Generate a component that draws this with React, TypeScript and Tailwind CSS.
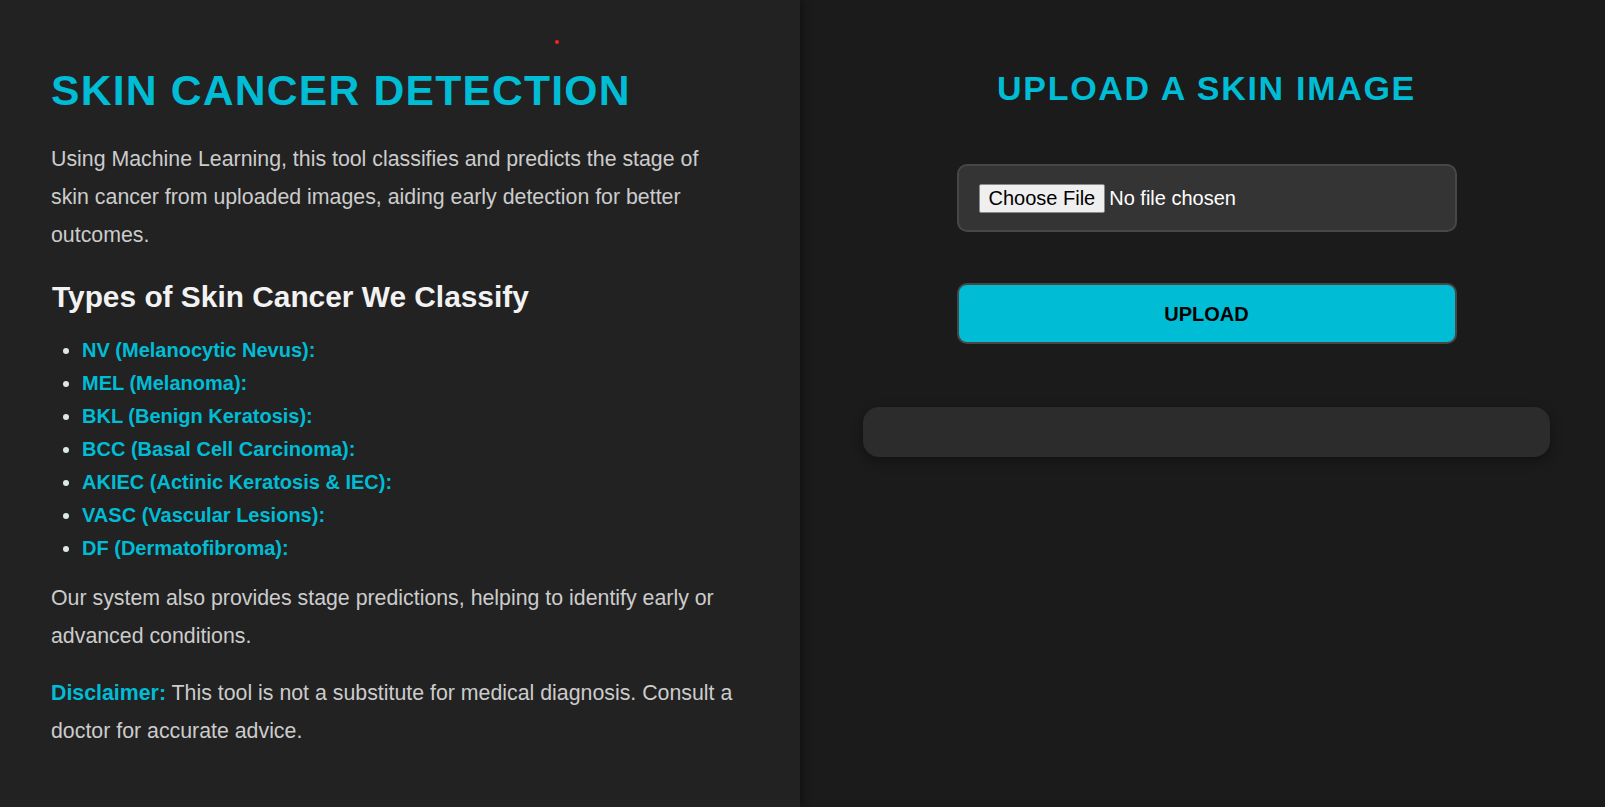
import React from 'react';

const types = [
  'NV (Melanocytic Nevus):',
  'MEL (Melanoma):',
  'BKL (Benign Keratosis):',
  'BCC (Basal Cell Carcinoma):',
  'AKIEC (Actinic Keratosis & IEC):',
  'VASC (Vascular Lesions):',
  'DF (Dermatofibroma):',
];

const App: React.FC = () => {
  return (
    <div className="flex h-[807px] w-full font-['Liberation_Sans',Arial,sans-serif] overflow-hidden">
      {/* info panel */}
      <section className="relative z-10 w-[800px] shrink-0 bg-[#222222] pl-[51px] pr-[63px] pt-[69px] shadow-[3px_0_8px_rgba(0,0,0,0.35)]">
        <span className="absolute left-[555px] top-[40px] h-[4px] w-[4px] rounded-full bg-[#ff1f1f]" />
        <h1 className="text-[42.67px] leading-none font-bold tracking-[1.2px] text-[#00bcd4]">
          SKIN CANCER DETECTION
        </h1>
        <p className="mt-[28px] text-[21.33px] leading-[38.4px] text-[#cccccc]">
          Using Machine Learning, this tool classifies and predicts the stage of skin cancer from uploaded images,
          aiding early detection for better outcomes.
        </p>
        <h2 className="mt-[27px] pl-[1px] text-[29.87px] leading-none font-bold text-[#f2f2f2]">
          Types of Skin Cancer We Classify
        </h2>
        <ul className="mt-[22px] list-disc pl-[31px] text-[20px] leading-[33px] text-[#dde6ea]">
          {types.map((t) => (
            <li key={t}>
              <strong className="font-bold text-[#00bcd4]">{t}</strong>
            </li>
          ))}
        </ul>
        <p className="mt-[14px] text-[21.33px] leading-[38.4px] text-[#cccccc]">
          Our system also provides stage predictions, helping to identify early or advanced conditions.
        </p>
        <p className="mt-[18px] text-[21.33px] leading-[38.4px] text-[#cccccc]">
          <strong className="font-bold text-[#00bcd4]">Disclaimer:</strong> This tool is not a substitute for
          medical diagnosis. Consult a doctor for accurate advice.
        </p>
      </section>

      {/* upload panel */}
      <section className="flex flex-1 flex-col items-center bg-[#1b1b1b] pl-[8px] pt-[71px]">
        <h2 className="text-[34px] leading-none font-bold tracking-[1.7px] text-[#00bcd4]">UPLOAD A SKIN IMAGE</h2>

        <div className="mt-[59px] flex h-[68px] w-[500px] items-center rounded-[10px] border-2 border-[#474747] bg-[#343434] px-5">
          <span className="flex h-[29px] items-center rounded-[2px] border border-[#8a8a8a] bg-[#efefef] px-[9px] text-[20px] text-black">
            Choose File
          </span>
          <span className="ml-[4px] text-[20px] text-white">No file chosen</span>
        </div>

        <button className="mt-[51px] h-[61px] w-[500px] rounded-[10px] border-2 border-[#474747] bg-[#00bcd4] text-[20px] font-bold text-black">
          UPLOAD
        </button>

        <div className="mt-[63px] h-[50px] w-[687px] rounded-[16px] bg-[#2c2c2c] shadow-[0_4px_12px_rgba(0,0,0,0.35)]" />
      </section>
    </div>
  );
};

export default App;
